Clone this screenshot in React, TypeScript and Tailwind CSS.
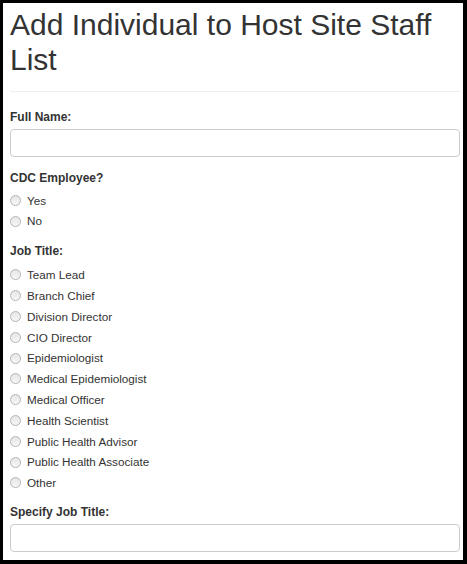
import React from 'react';

const jobTitles = [
  'Team Lead',
  'Branch Chief',
  'Division Director',
  'CIO Director',
  'Epidemiologist',
  'Medical Epidemiologist',
  'Medical Officer',
  'Health Scientist',
  'Public Health Advisor',
  'Public Health Associate',
  'Other',
];

function Radio({ label }: { label: string }) {
  return (
    <label className="flex items-center h-[20.8px] text-[11.7px] text-[#333]">
      <span className="w-[11px] h-[11px] rounded-full border border-[#b4b4b4] bg-gradient-to-b from-[#e6e6e6] to-[#f7f7f7] mr-[6px] shrink-0" />
      {label}
    </label>
  );
}

function Field({ label }: { label: string }) {
  return (
    <div>
      <div className="text-[12px] leading-[17px] font-bold text-[#333]">{label}</div>
      <input
        type="text"
        className="mt-[3px] block w-full h-[28px] rounded-[4px] border border-[#ccc] bg-white px-2 text-[12px] outline-none"
      />
    </div>
  );
}

export default function App() {
  return (
    <div
      className="w-[467px] h-[564px] bg-black border-l-[3px] border-t-[3px] border-r-[4px] border-b-[4px] border-black box-border"
      style={{ fontFamily: '"Liberation Sans", Arial, sans-serif' }}
    >
      <div className="h-full bg-white pl-[7px] pr-[3px] pt-[4px]">
        <h1 className="text-[30px] leading-[35px] font-normal text-[#333]">
          Add Individual to Host Site Staff List
        </h1>
        <hr className="mt-[14px] border-t border-[#eee]" />

        <div className="mt-[17px]">
          <Field label="Full Name:" />
        </div>

        <div className="mt-[13px] text-[12px] leading-[17px] font-bold text-[#333]">CDC Employee?</div>
        <div className="mt-[3px]">
          <Radio label="Yes" />
          <Radio label="No" />
        </div>

        <div className="mt-[11px] text-[12px] leading-[17px] font-bold text-[#333]">Job Title:</div>
        <div className="mt-[5px]">
          {jobTitles.map((t) => (
            <Radio key={t} label={t} />
          ))}
        </div>

        <div className="mt-[11px]">
          <Field label="Specify Job Title:" />
        </div>
      </div>
    </div>
  );
}
